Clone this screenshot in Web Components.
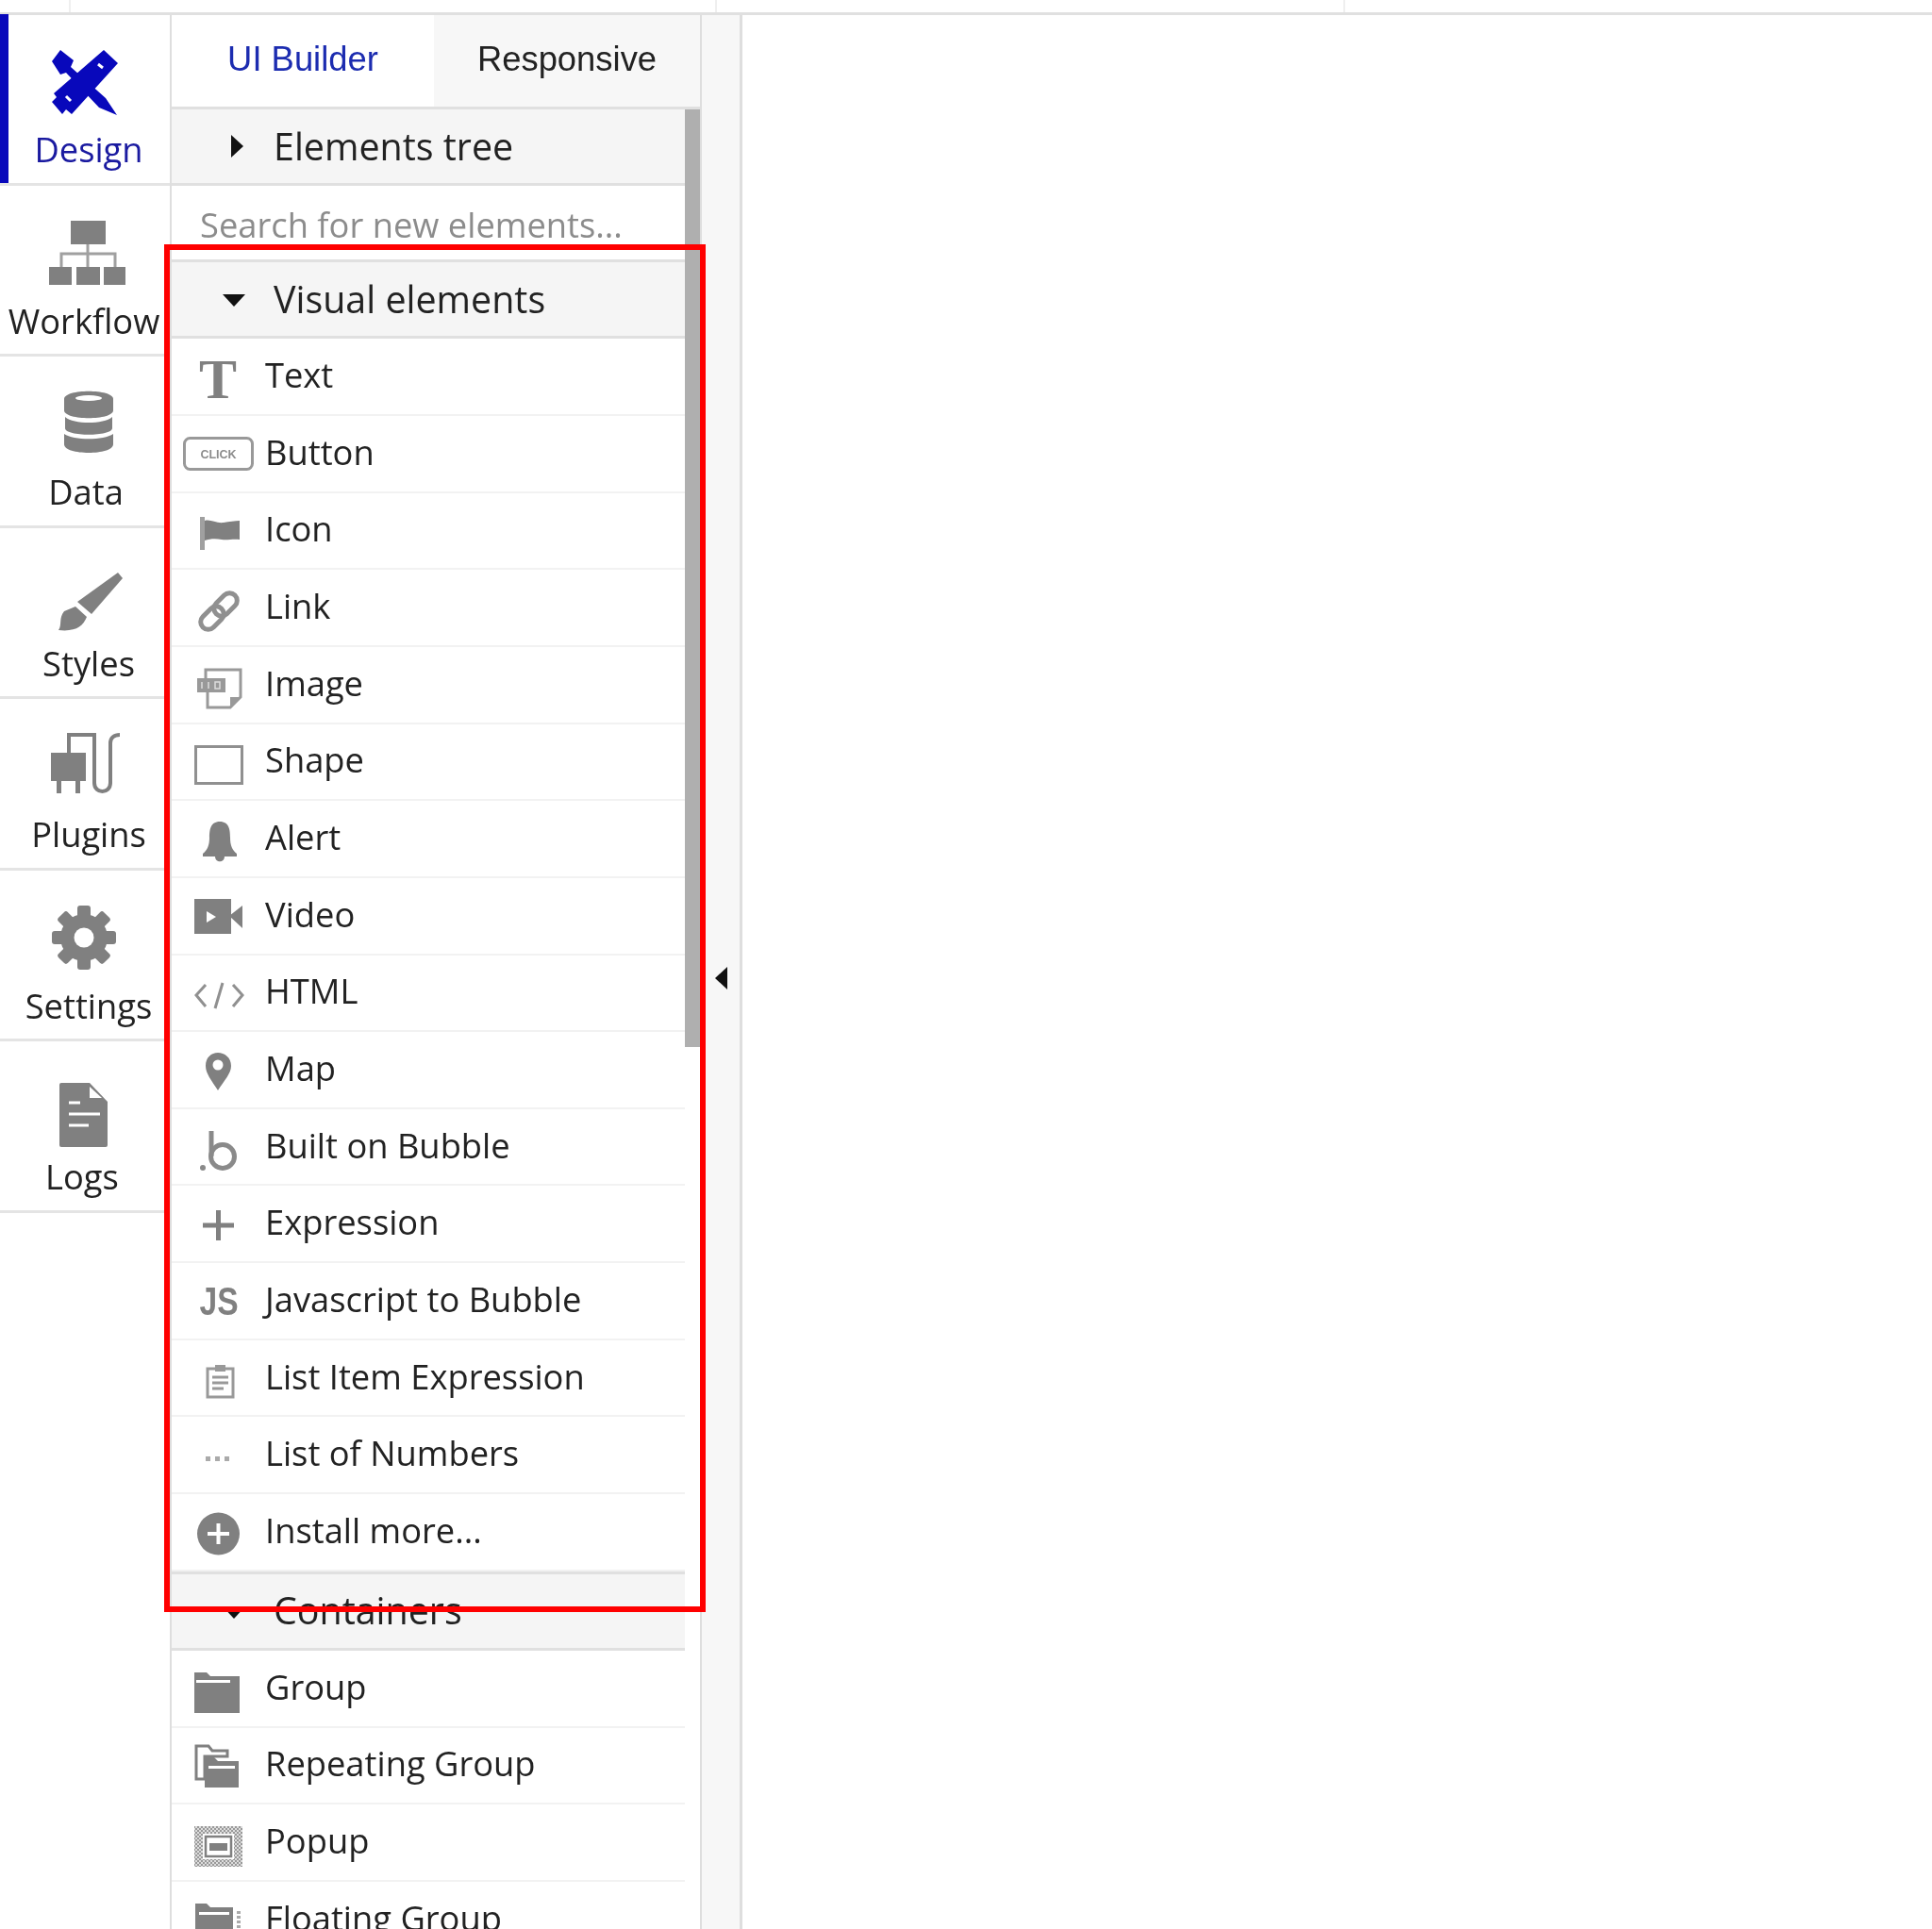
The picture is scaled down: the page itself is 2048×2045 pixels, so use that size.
<!DOCTYPE html>
<html>
<head>
<meta charset="utf-8">
<title>UI Builder</title>
<style>
  html, body { margin: 0; height: 100%; background: #fff; overflow: hidden; }
</style>
</head>
<body>
<editor-shell>
  <side-nav slot="nav">
    <nav-item label="Design" icon="design" shift="8" active></nav-item>
    <nav-item label="Workflow" icon="workflow" shift="-2"></nav-item>
    <nav-item label="Data" icon="data" shift="2"></nav-item>
    <nav-item label="Styles" icon="styles" shift="8"></nav-item>
    <nav-item label="Plugins" icon="plugins" shift="8"></nav-item>
    <nav-item label="Settings" icon="settings" shift="8"></nav-item>
    <nav-item label="Logs" icon="logs" shift="-6"></nav-item>
  </side-nav>
  <element-panel slot="panel">
    <section-header label="Elements tree"></section-header>
    <search-row placeholder="Search for new elements..."></search-row>
    <section-header label="Visual elements" open></section-header>
    <element-row label="Text" icon="text"></element-row>
    <element-row label="Button" icon="button"></element-row>
    <element-row label="Icon" icon="flag"></element-row>
    <element-row label="Link" icon="link"></element-row>
    <element-row label="Image" icon="image"></element-row>
    <element-row label="Shape" icon="shape"></element-row>
    <element-row label="Alert" icon="alert"></element-row>
    <element-row label="Video" icon="video"></element-row>
    <element-row label="HTML" icon="html"></element-row>
    <element-row label="Map" icon="map"></element-row>
    <element-row label="Built on Bubble" icon="bubble"></element-row>
    <element-row label="Expression" icon="plus"></element-row>
    <element-row label="Javascript to Bubble" icon="js"></element-row>
    <element-row label="List Item Expression" icon="clipboard"></element-row>
    <element-row label="List of Numbers" icon="dots"></element-row>
    <element-row label="Install more..." icon="install"></element-row>
    <section-header label="Containers" open></section-header>
    <element-row label="Group" icon="group"></element-row>
    <element-row label="Repeating Group" icon="repeating"></element-row>
    <element-row label="Popup" icon="popup"></element-row>
    <element-row label="Floating Group" icon="floating"></element-row>
  </element-panel>
</editor-shell>

<script>
const GRAY = "#808080";

// nav icons are drawn in a 100x90 box, row icons in an 80x60 box
const NAV_ICONS = {
  design: `
    <path d="M15 21L24 9L38 20L35 27L72 60L84 78L65 70L30 33L24 35Z" fill="#0808bb"/>
    <path d="M70 9L85 23L36 77L30 72L26 77L15 64L20 59L17 55Z" fill="#0808bb"/>
    <path d="M64 24l5 4M30 58l5 5" stroke="#fff" stroke-width="3"/>
  `,
  workflow: `
    <path d="M53 33V57M25 57V43H82V57" fill="none" stroke="#a0a0a0" stroke-width="3"/>
    <rect x="35" y="8" width="37" height="25" fill="${GRAY}"/>
    <rect x="12" y="57" width="24" height="19" fill="${GRAY}"/>
    <rect x="41" y="57" width="25" height="19" fill="${GRAY}"/>
    <rect x="70" y="57" width="23" height="19" fill="${GRAY}"/>
  `,
  data: `
    <path d="M28 16C28 5 80 5 80 16V28C80 39 28 39 28 28Z" fill="${GRAY}"/>
    <ellipse cx="54" cy="15" rx="14" ry="3" fill="#fff"/>
    <path d="M29 35C38 43 70 43 79 35V47C79 56 29 56 29 47Z" fill="${GRAY}"/>
    <path d="M28 53C38 60 70 60 80 53V64C80 76 28 76 28 64Z" fill="${GRAY}"/>
  `,
  styles: `
    <path d="M85 18L90 24L57 62L42 49Z" fill="${GRAY}"/>
    <path d="M40 54L52 65C48 75 40 81 22 79C26 74 22 66 28 59Z" fill="${GRAY}"/>
  `,
  plugins: `
    <rect x="14" y="28" width="37" height="30" fill="${GRAY}"/>
    <rect x="20" y="58" width="5" height="13" fill="${GRAY}"/>
    <rect x="40" y="58" width="5" height="13" fill="${GRAY}"/>
    <path d="M33 28V9H60V60C60 72 77 72 77 60V18C77 12 81 9 87 9" fill="none" stroke="${GRAY}" stroke-width="4"/>
  `,
  settings: `
    <g transform="translate(49 42)" fill="${GRAY}">
      <rect x="-7" y="-34" width="14" height="68" rx="3"/>
      <rect x="-7" y="-34" width="14" height="68" rx="3" transform="rotate(45)"/>
      <rect x="-7" y="-34" width="14" height="68" rx="3" transform="rotate(90)"/>
      <rect x="-7" y="-34" width="14" height="68" rx="3" transform="rotate(135)"/>
      <circle r="25"/>
      <circle r="10.5" fill="#fff"/>
    </g>
  `,
  logs: `
    <path d="M23 17Q23 15 25 15H55L74 35V81Q74 83 72 83H25Q23 83 23 81Z" fill="${GRAY}"/>
    <path d="M55 19V31H68Z" fill="#fff"/>
    <path d="M33 36H45M33 48H66M33 60H54" stroke="#fff" stroke-width="3"/>
  `,
};

const ROW_ICONS = {
  text: `<text x="40" y="52" text-anchor="middle" font-family="Liberation Serif" font-weight="700" font-size="60" fill="${GRAY}">T</text>`,
  button: `
    <rect x="4.5" y="12.5" width="72" height="33" rx="6" fill="none" stroke="#999" stroke-width="3"/>
    <text x="40.5" y="33.5" text-anchor="middle" font-family="Liberation Sans" font-weight="700" font-size="12.5" fill="#8c8c8c">CLICK</text>
  `,
  flag: `
    <rect x="21" y="15" width="5" height="35" fill="#a0a0a0"/>
    <path d="M26 19C32 17 38 22 46 21C52 20 58 19 63 19V39C56 38 50 40 44 39C38 38 32 38 26 40Z" fill="${GRAY}"/>
  `,
  link: `
    <g fill="none" stroke="#909090" stroke-width="5" transform="rotate(-45 41 33)">
      <rect x="17" y="25" width="28" height="16" rx="8"/>
      <rect x="37" y="25" width="28" height="16" rx="8"/>
    </g>
  `,
  image: `
    <path d="M27 22V13H64V42L53 53H29V37" fill="none" stroke="#999" stroke-width="3"/>
    <path d="M64 42H53V53Z" fill="#999"/>
    <rect x="18" y="22" width="30" height="15" fill="#999"/>
    <path d="M23 26v7M30 26v7M37 26h5v7h-5z" fill="none" stroke="#ddd" stroke-width="1.5"/>
  `,
  shape: `<rect x="16.5" y="13.5" width="49" height="39" fill="none" stroke="#909090" stroke-width="3"/>`,
  alert: `
    <path d="M42 11C52 11 53 20 53 28C53 36 55 41 60 45V48H24V45C29 41 31 36 31 28C31 20 32 11 42 11Z" fill="${GRAY}"/>
    <path d="M37 48H47C47 55 37 55 37 48Z" fill="${GRAY}"/>
  `,
  video: `
    <rect x="15" y="11" width="39" height="37" fill="${GRAY}"/>
    <path d="M52 29L66 18V42Z" fill="${GRAY}"/>
    <path d="M28 24L38 30L28 36Z" fill="#fff"/>
  `,
  html: `<path d="M27 21L17 32L27 44M37 46L45 19M56 21L66 32L56 44" fill="none" stroke="#909090" stroke-width="3"/>`,
  map: `
    <path d="M40 51C33 40 27 33 27 25C27 16 33 11 40 11C47 11 54 16 54 25C54 33 47 40 40 51Z" fill="${GRAY}"/>
    <circle cx="40" cy="24" r="5.5" fill="#fff"/>
  `,
  bubble: `
    <path d="M33 12V39" fill="none" stroke="#8a8a8a" stroke-width="5"/>
    <circle cx="45" cy="39" r="12.5" fill="none" stroke="#8a8a8a" stroke-width="5"/>
    <circle cx="24" cy="51" r="3" fill="#8a8a8a"/>
  `,
  plus: `<path d="M24 31H57M40.5 15V47" fill="none" stroke="${GRAY}" stroke-width="5"/>`,
  js: `<text transform="translate(41 44) scale(.8 1)" text-anchor="middle" font-family="Liberation Sans" font-weight="700" font-size="42" fill="${GRAY}">JS</text>`,
  clipboard: `
    <rect x="29" y="19" width="27" height="30" fill="none" stroke="#999" stroke-width="3"/>
    <rect x="37" y="15" width="11" height="7" fill="#999"/>
    <path d="M34 28H51M34 34H51M34 40H46" stroke="#999" stroke-width="3"/>
  `,
  dots: `
    <rect x="27" y="31" width="5" height="5" fill="#aaa"/>
    <rect x="37" y="31" width="5" height="5" fill="#aaa"/>
    <rect x="47" y="31" width="5" height="5" fill="#aaa"/>
  `,
  install: `
    <circle cx="40.5" cy="31" r="22.5" fill="${GRAY}"/>
    <path d="M29 31H52M40.5 20V42" stroke="#fff" stroke-width="4"/>
  `,
  group: `
    <path d="M15 12H28L32 16H63V55H15Z" fill="${GRAY}"/>
    <rect x="17" y="20" width="36" height="3" fill="#fff"/>
  `,
  repeating: `
    <path d="M17 9H30L34 14H50V20H26V44H17Z" fill="none" stroke="${GRAY}" stroke-width="3"/>
    <path d="M26 21H36L40 25H62V53H26Z" fill="${GRAY}"/>
    <rect x="30" y="30" width="28" height="3" fill="#fff"/>
  `,
  popup: `
    <rect x="15" y="12" width="51" height="43" fill="url(#check)"/>
    <rect x="24" y="20" width="33" height="27" fill="#fff"/>
    <rect x="27" y="23" width="27" height="21" fill="none" stroke="${GRAY}" stroke-width="2.5"/>
    <rect x="31" y="30" width="19" height="8" fill="${GRAY}"/>
    <defs><pattern id="check" width="4" height="4" patternUnits="userSpaceOnUse">
      <rect width="4" height="4" fill="#999"/><rect width="2" height="2" fill="#ddd"/><rect x="2" y="2" width="2" height="2" fill="#ddd"/>
    </pattern></defs>
  `,
  floating: `
    <path d="M16 12H28L32 16H56V55H16Z" fill="${GRAY}"/>
    <rect x="20" y="21" width="32" height="3" fill="#fff"/>
    <path d="M62 20V55" stroke="#aaa" stroke-width="4" stroke-dasharray="3 2"/>
  `,
};

class EditorShell extends HTMLElement {
  constructor() {
    super();
    this.attachShadow({ mode: "open" });
    this.shadowRoot.innerHTML = `
      <style>
        :host {
          display: block;
          position: relative;
          height: 2045px;
          overflow: hidden;
          font-family: "Open Sans", sans-serif;
          color: #222;
        }
        .top {
          display: grid;
          grid-template-columns: 75px 685px 666px 1fr;
          height: 13px;
          border-bottom: 3px solid #e0e0e0;
        }
        .top div { border-right: 2px solid #efefef; }
        .top div:last-child { border: none; }
        .body { display: flex; height: 2029px; filter: blur(0.6px); }
        .gutter {
          box-sizing: border-box;
          width: 43px;
          padding: 1009px 0 0 14px;
          background: #f7f7f7;
          border-right: 3px solid #dedede;
        }
        .gutter i {
          display: block;
          width: 0;
          height: 0;
          border-style: solid;
          border-width: 12px 13px 12px 0;
          border-color: transparent #111 transparent transparent;
        }
        .mark {
          position: absolute;
          left: 174px;
          top: 259px;
          width: 574px;
          height: 1450px;
          box-sizing: border-box;
          border: 6px solid #f00;
        }
      </style>
      <div class="top"><div></div><div></div><div></div><div></div></div>
      <div class="body">
        <slot name="nav"></slot>
        <slot name="panel"></slot>
        <div class="gutter"><i></i></div>
      </div>
      <div class="mark"></div>
    `;
  }
}

class SideNav extends HTMLElement {
  constructor() {
    super();
    this.attachShadow({ mode: "open" });
    this.shadowRoot.innerHTML = `
      <style>
        :host { display: block; width: 180px; flex: none; margin-top: -1px; }
      </style>
      <slot></slot>
    `;
  }
}

class NavItem extends HTMLElement {
  constructor() {
    super();
    this.attachShadow({ mode: "open" });
    const shift = this.getAttribute("shift") || 0;
    this.shadowRoot.innerHTML = `
      <style>
        :host {
          display: flex;
          flex-direction: column;
          align-items: center;
          box-sizing: border-box;
          height: 181.5px;
          padding-top: 29px;
          border-bottom: 3px solid #e4e4e4;
        }
        :host([active]) { box-shadow: inset 9px 0 #0808bb; color: #1a1aa0; }
        svg { display: block; flex: none; }
        span { margin-top: 4px; font-size: 36.3px; line-height: 40px; white-space: nowrap; margin-left: ${shift}px; }
      </style>
      <svg width="100" height="90" viewBox="0 0 100 90">${NAV_ICONS[this.getAttribute("icon")]}</svg>
      <span>${this.getAttribute("label")}</span>
    `;
  }
}

class ElementPanel extends HTMLElement {
  constructor() {
    super();
    this.attachShadow({ mode: "open" });
    this.shadowRoot.innerHTML = `
      <style>
        :host {
          display: block;
          box-sizing: border-box;
          width: 564px;
          flex: none;
          border-left: 2px solid #dedede;
          border-right: 2px solid #dedede;
          height: 100%;
        }
        .tabs {
          display: grid;
          grid-template-columns: 278px 1fr;
          height: 97px;
          border-bottom: 3px solid #e0e0e0;
          font-family: "Liberation Sans", sans-serif;
          font-size: 36.4px;
        }
        .tabs div { display: flex; align-items: center; justify-content: center; padding-bottom: 4px; }
        .tabs .on { color: #1c2cb0; }
        .tabs .off { background: #f7f7f7; color: #222; }
        .main { display: flex; }
        .list { flex: 1; min-width: 0; }
        .track { width: 16px; flex: none; }
        .thumb { height: 994px; background: #afafaf; }
      </style>
      <div class="tabs">
        <div class="on">UI Builder</div>
        <div class="off">Responsive</div>
      </div>
      <div class="main">
        <div class="list"><slot></slot></div>
        <div class="track"><div class="thumb"></div></div>
      </div>
    `;
  }
}

class SectionHeader extends HTMLElement {
  constructor() {
    super();
    this.attachShadow({ mode: "open" });
    this.shadowRoot.innerHTML = `
      <style>
        :host {
          display: flex;
          align-items: center;
          box-sizing: border-box;
          height: 81px;
          padding-left: 54px;
          background: #f5f5f5;
          border-bottom: 3px solid #e0e0e0;
          font-size: 39.4px;
        }
        :host([open]) { height: 84.4px; border-top: 3px solid #e0e0e0; }
        i { display: block; width: 54px; flex: none; }
        i::before {
          content: "";
          display: block;
          width: 0;
          height: 0;
          margin-left: 9px;
          border-style: solid;
          border-width: 12px 0 12px 13px;
          border-color: transparent transparent transparent #111;
        }
        :host([open]) i::before {
          margin-left: 0;
          margin-top: 3px;
          border-width: 13px 12px 0;
          border-color: #111 transparent transparent;
        }
        span { white-space: nowrap; padding-bottom: 1px; }
      </style>
      <i></i><span>${this.getAttribute("label")}</span>
    `;
  }
}

class SearchRow extends HTMLElement {
  constructor() {
    super();
    this.attachShadow({ mode: "open" });
    this.shadowRoot.innerHTML = `
      <style>
        :host {
          display: block;
          height: 78px;
          padding: 21px 0 0 30px;
          box-sizing: border-box;
          font-size: 36.3px;
          line-height: 40px;
          color: #8c8c8c;
          white-space: nowrap;
        }
      </style>
      ${this.getAttribute("placeholder")}
    `;
  }
}

class ElementRow extends HTMLElement {
  constructor() {
    super();
    this.attachShadow({ mode: "open" });
    this.shadowRoot.innerHTML = `
      <style>
        :host {
          display: flex;
          align-items: center;
          box-sizing: border-box;
          height: 81.65px;
          padding-left: 9px;
          border-bottom: 2px solid #f2f2f2;
          font-size: 36.3px;
        }
        svg { display: block; flex: none; margin-right: 10px; margin-top: 2px; overflow: visible; }
        span { white-space: nowrap; padding-bottom: 4px; }
      </style>
      <svg width="80" height="60" viewBox="0 0 80 60">${ROW_ICONS[this.getAttribute("icon")]}</svg>
      <span>${this.getAttribute("label")}</span>
    `;
  }
}

customElements.define("editor-shell", EditorShell);
customElements.define("side-nav", SideNav);
customElements.define("nav-item", NavItem);
customElements.define("element-panel", ElementPanel);
customElements.define("section-header", SectionHeader);
customElements.define("search-row", SearchRow);
customElements.define("element-row", ElementRow);
</script>
</body>
</html>
